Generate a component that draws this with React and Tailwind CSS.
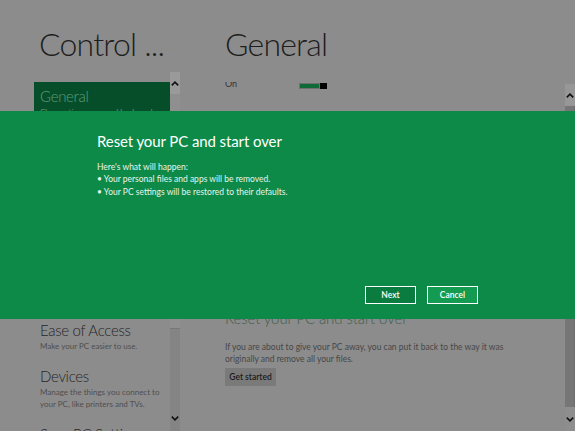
import React from "react";

function Chevron({ up }) {
  return (
    <svg width="8" height="5" viewBox="0 0 8 5" className="block">
      {up ? (
        <path d="M0.8 4.4 L4 1.2 L7.2 4.4" stroke="#111" strokeWidth="1.6" fill="none" />
      ) : (
        <path d="M0.8 0.6 L4 3.8 L7.2 0.6" stroke="#111" strokeWidth="1.6" fill="none" />
      )}
    </svg>
  );
}

function Item({ title, desc, selected }) {
  return (
    <div className={`px-[6px] pt-[4px] pb-[10px] ${selected ? "bg-[#064e2a] text-[#5c9c78]" : "text-[#262626]"}`}>
      <div className="text-[15px] font-light leading-[20px] tracking-[-0.3px] whitespace-nowrap">{title}</div>
      <div className={`text-[8px] leading-[12px] ${selected ? "" : "text-[#4f4f4f]"}`}>
        {desc.map((d, i) => (
          <div key={i} className="whitespace-nowrap">{d}</div>
        ))}
      </div>
    </div>
  );
}

export default function App() {
  return (
    <div className="relative w-[575px] h-[431px] overflow-hidden bg-[#8c8c8c] font-['Lato',sans-serif]">
      <div className="flex h-full">
        {/* Left pane */}
        <div className="w-[180px] shrink-0 flex flex-col">
          <h1 className="pl-[39px] pt-[27px] text-[32px] font-light leading-[34px] tracking-[-0.8px] text-[#1e1e1e] whitespace-nowrap">
            Control ...
          </h1>
          <div className="mt-[11px] flex flex-1 min-h-0">
            <div className="flex-1 pl-[34px] pt-[10px] overflow-hidden">
              <Item selected title="General" desc={["Change time zone and keyboard", "settings."]} />
              <Item title="Privacy" desc={["Control how apps use your", "personal information."]} />
              <Item title="Search" desc={["Choose what appears in search", "results and suggestions."]} />
              <Item title="Share" desc={["Choose which apps appear", "when you share."]} />
              <div className="mt-[2px]">
                <Item title="Ease of Access" desc={["Make your PC easier to use."]} />
                <Item title="Devices" desc={["Manage the things you connect to", "your PC, like printers and TVs."]} />
                <Item title="Sync PC Settings" desc={["Sync your settings across PCs."]} />
              </div>
            </div>
            <div className="w-[10px] flex flex-col bg-[#848484]">
              <div className="h-[22px] bg-[#9a9a9a] flex items-center justify-center">
                <Chevron up />
              </div>
              <div className="h-[235px] bg-[#8f8f8f] border-b border-[#777]" />
              <div className="flex-1" />
              <div className="h-[26px] flex items-center justify-center">
                <Chevron />
              </div>
            </div>
          </div>
        </div>

        {/* Right pane */}
        <div className="flex-1 flex flex-col pl-[45px]">
          <h1 className="pt-[27px] text-[32px] font-light leading-[34px] tracking-[-0.8px] text-[#1e1e1e] whitespace-nowrap">
            General
          </h1>
          <div className="mt-[21px] flex flex-1 min-h-0">
            <div className="flex-1 overflow-hidden">
              <div className="-mt-[4px] flex items-start h-[12px]">
                <div className="w-[74px] text-[9px] leading-[12px] text-[#333]">On</div>
                <div className="mt-[5px] flex h-[6px] w-[28px]">
                  <div className="flex-1 bg-[#0e6a36] border border-[#707070]" />
                  <div className="w-[7px] bg-black" />
                </div>
              </div>
              <div className="h-[218px] overflow-hidden pt-[30px]">
                <div className="text-[15px] font-light leading-[20px] text-[#1e1e1e]">
                  Refresh your PC without affecting your files
                </div>
              </div>
              <div className="text-[15px] font-light leading-[20px] tracking-[-0.1px] text-[#3f5f4c] whitespace-nowrap">
                Reset your PC and start over
              </div>
              <div className="mt-[14px] text-[8.5px] leading-[11.5px] text-[#474747] whitespace-nowrap">
                If you are about to give your PC away, you can put it back to the way it was
                <br />
                originally and remove all your files.
              </div>
              <button className="mt-[3px] h-[18px] w-[51px] bg-[#7a7a7a] text-[8.5px] font-semibold text-[#1a1a1a] flex items-center justify-center">
                Get started
              </button>
            </div>
            <div className="mt-[2px] w-[10px] flex flex-col">
              <div className="h-[22px] bg-[#979797] flex items-center justify-center">
                <Chevron up />
              </div>
              <div className="flex-1 bg-[#767676] border-r border-[#6c6c6c]" />
              <div className="h-[24px] bg-[#8e8e8e] flex items-center justify-center">
                <Chevron />
              </div>
            </div>
          </div>
        </div>
      </div>

      {/* Modal band */}
      <div className="absolute left-0 right-0 top-[111px] h-[208px] bg-[#0d8a48] flex flex-col px-[97px] pt-[20px] pb-[15px] text-white">
        <div className="text-[15px] leading-[20px] tracking-[-0.1px] whitespace-nowrap">Reset your PC and start over</div>
        <div className="mt-[10px] text-[8.5px] leading-[12.3px] text-[#e8f3ec]">
          <div>Here's what will happen:</div>
          <div>• Your personal files and apps will be removed.</div>
          <div>• Your PC settings will be restored to their defaults.</div>
        </div>
        <div className="mt-auto flex justify-end gap-[11px]">
          <button className="h-[18px] w-[51px] border-[1.5px] border-white bg-[#0b7c40] text-[8.5px] font-semibold text-white flex items-center justify-center">
            Next
          </button>
          <button className="h-[18px] w-[51px] border-[1.5px] border-white bg-[#139b52] text-[8.5px] font-semibold text-white flex items-center justify-center">
            Cancel
          </button>
        </div>
      </div>
    </div>
  );
}
